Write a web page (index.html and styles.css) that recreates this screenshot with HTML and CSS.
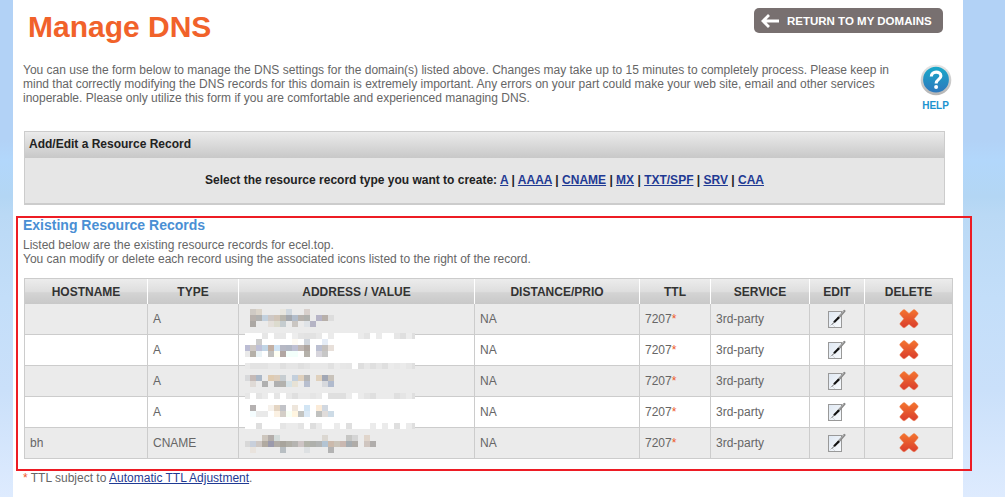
FILE: index.html
```html
<!DOCTYPE html>
<html lang="en">
<head>
<meta charset="utf-8">
<title>Manage DNS</title>
<link rel="stylesheet" href="styles.css">
</head>
<body>
<svg class="defs" width="0" height="0" aria-hidden="true">
  <defs>
    <linearGradient id="helpFill" x1="0" y1="0" x2="0" y2="1"><stop offset="0" stop-color="#19a8c9"/><stop offset="1" stop-color="#2f78bd"/></linearGradient>
    <linearGradient id="helpRing" x1="0" y1="0" x2="0" y2="1"><stop offset="0" stop-color="#e6e6e6"/><stop offset="1" stop-color="#b4b4b4"/></linearGradient>
    <linearGradient id="crossFill" x1="0" y1="0" x2="0" y2="1"><stop offset="0" stop-color="#f4752f"/><stop offset="1" stop-color="#d93c2c"/></linearGradient>
    <linearGradient id="paperFill" x1="0" y1="0" x2="1" y2="1"><stop offset="0" stop-color="#dfe8f3"/><stop offset="1" stop-color="#f8fafc"/></linearGradient>
  </defs>
  <symbol id="edit" viewBox="0 0 20 20">
    <rect x="1.5" y="2.5" width="13" height="16" fill="url(#paperFill)" stroke="#999"/>
    <path d="M5 15l3 3M2.5 17.5l3-3" stroke="#d5d8dd" fill="none"/>
    <path d="M11 9.2L17.4 2" stroke="#858585" stroke-width="2.3" stroke-linecap="round"/>
    <path d="M11.5 8L17.1 1.8" stroke="#bbb" stroke-width=".7"/>
    <path d="M7 13.2L12 8.2" stroke="#111" stroke-width="2.1"/>
    <path d="M4.8 15.7L7.6 12.8" stroke="#555" stroke-width=".9"/>
  </symbol>
  <symbol id="cross" viewBox="0 0 20 20">
    <path d="M5.8 .8L10 4.4L14.3 .8Q15.3 .2 16.2 1L18.7 3.5Q19.6 4.5 18.8 5.4L15.2 9.8L18.8 14Q19.5 15 18.7 15.9L16 18.4Q15 19.2 14 18.4L10 15.2L5.9 18.5Q5 19.2 4 18.4L1.2 15.8Q.4 14.9 1.2 14L4.8 9.8L1.1 5.6Q.3 4.6 1.2 3.6L3.9 1Q4.9 .2 5.8 .8Z" fill="url(#crossFill)" stroke="#ee8a5c" stroke-width=".5"/>
  </symbol>
</svg>
<main class="page">
  <header class="top">
    <h1 class="title">Manage DNS</h1>
    <a class="return">
      <svg class="return-arrow" width="20" height="14" viewBox="0 0 20 14"><path d="M9 1L3 7l6 6M3 7h16" fill="none" stroke="#fff" stroke-width="2.8"/></svg>
      <span class="return-label">RETURN TO MY DOMAINS</span>
    </a>
  </header>
  <section class="intro">
    <p class="intro-text">You can use the form below to manage the DNS settings for the domain(s) listed above. Changes may take up to 15 minutes to completely process. Please keep in<br>mind that correctly modifying the DNS records for this domain is extremely important. Any errors on your part could make your web site, email and other services<br>inoperable. Please only utilize this form if you are comfortable and experienced managing DNS.</p>
    <div class="help">
      <svg width="32" height="32" viewBox="0 0 32 32"><circle cx="16" cy="16" r="15.3" fill="url(#helpRing)"/><circle cx="16" cy="15.7" r="12.9" fill="url(#helpFill)"/><path d="M11.3 12.6C11.3 6.7 20.9 6.7 20.9 12C20.9 15.4 16.1 15.4 16.1 19.4" fill="none" stroke="#fff" stroke-width="3.1"/><circle cx="16.1" cy="23" r="2" fill="#fff"/></svg>
      <span class="help-label">HELP</span>
    </div>
  </section>
  <section class="panel">
    <h2 class="panel-head">Add/Edit a Resource Record</h2>
    <p class="panel-body"><span class="types">Select the resource record type you want to create: <a>A</a> | <a>AAAA</a> | <a>CNAME</a> | <a>MX</a> | <a>TXT/SPF</a> | <a>SRV</a> | <a>CAA</a></span></p>
  </section>
  <section class="existing">
    <h2 class="existing-title">Existing Resource Records</h2>
    <p class="existing-text">Listed below are the existing resource records for ecel.top.<br>You can modify or delete each record using the associated icons listed to the right of the record.</p>
    <div class="table-wrap">
    <table class="records">
      <colgroup><col class="c-host"><col class="c-type"><col class="c-addr"><col class="c-dist"><col class="c-ttl"><col class="c-serv"><col class="c-edit"><col class="c-del"></colgroup>
      <thead><tr><th>HOSTNAME</th><th>TYPE</th><th>ADDRESS / VALUE</th><th>DISTANCE/PRIO</th><th>TTL</th><th>SERVICE</th><th>EDIT</th><th>DELETE</th></tr></thead>
      <tbody>
        <tr><td></td><td>A</td><td></td><td>NA</td><td>7207<i>*</i></td><td>3rd-party</td><td class="icon"><svg><use href="#edit"/></svg></td><td class="icon"><svg><use href="#cross"/></svg></td></tr>
        <tr><td></td><td>A</td><td></td><td>NA</td><td>7207<i>*</i></td><td>3rd-party</td><td class="icon"><svg><use href="#edit"/></svg></td><td class="icon"><svg><use href="#cross"/></svg></td></tr>
        <tr><td></td><td>A</td><td></td><td>NA</td><td>7207<i>*</i></td><td>3rd-party</td><td class="icon"><svg><use href="#edit"/></svg></td><td class="icon"><svg><use href="#cross"/></svg></td></tr>
        <tr><td></td><td>A</td><td></td><td>NA</td><td>7207<i>*</i></td><td>3rd-party</td><td class="icon"><svg><use href="#edit"/></svg></td><td class="icon"><svg><use href="#cross"/></svg></td></tr>
        <tr><td>bh</td><td>CNAME</td><td></td><td>NA</td><td>7207<i>*</i></td><td>3rd-party</td><td class="icon"><svg><use href="#edit"/></svg></td><td class="icon"><svg><use href="#cross"/></svg></td></tr>
      </tbody>
    </table>
    <svg class="mosaic" id="mosaic" width="170" height="145" viewBox="1 0 170 145" shape-rendering="crispEdges"></svg>
    </div>
    <p class="note"><i>*</i> TTL subject to <a>Automatic TTL Adjustment</a>.</p>
  </section>
</main>
<div class="highlight"></div>
<script src="mosaic.js"></script>
</body>
</html>
```
FILE: styles.css
```css
* { box-sizing: border-box; }
body {
  margin: 0;
  height: 497px;
  overflow: hidden;
  font: 12px/14px "Liberation Sans", Arial, sans-serif;
  color: #666;
  background: linear-gradient(#b2d2f6 0, #b2d2f6 140px, #b2d7fb 160px, #b3d6f4 197px, #bad9f5 215px, #c3def9 298px, #cae0fa 390px, #deebfe 497px);
}
.defs { position: absolute; }
h1, h2, p { margin: 0; }
i { color: #ee5a2b; font-style: normal; }
a { color: #1f3a93; text-decoration: underline; }
.page { width: 950px; height: 497px; margin-left: 13px; padding: 8px 0 0 11px; background: #fff; }
.top { display: flex; justify-content: space-between; height: 55px; padding: 0 20px 0 4px; }
.title { font-size: 30px; line-height: 37px; color: #f1622a; }
.return { display: flex; align-items: center; width: 189px; height: 25px; padding-left: 6px; gap: 7px; border-radius: 5px; background: #787070; text-decoration: none; }
.return-label { color: #fff; font-size: 11.5px; font-weight: bold; white-space: nowrap; }
.intro { display: flex; height: 68px; }
.intro-text { width: 896px; margin-left: -1px; white-space: nowrap; }
.help { display: flex; flex-direction: column; align-items: center; width: 33px; padding-top: 1px; }
.help-label { margin-top: 3px; font-size: 10px; font-weight: bold; color: #1d93cf; }
.panel { width: 921px; height: 74px; border: 1px solid #ccc; border-bottom-width: 2px; background: #e6e6e6; color: #222; }
.panel-head { height: 26px; padding-left: 4px; font-size: 12px; line-height: 25px; background: linear-gradient(#ebebeb, #c8c8c8); }
.panel-body { line-height: 44px; font-weight: bold; text-align: center; }
.types { white-space: nowrap; }
.existing { padding-top: 12px; }
.existing-title { margin-left: -1px; font-size: 14px; line-height: 16px; color: #4a8fd4; }
.existing-text { margin-left: -1px; padding-top: 5px; }
.table-wrap { position: relative; margin-top: 12px; }
.records { width: 929px; table-layout: fixed; border-collapse: separate; border-spacing: 0; border: solid #ccc; border-width: 1px 0 0 1px; }
.c-host { width: 123px; }
.c-type { width: 91px; }
.c-addr { width: 236px; }
.c-dist { width: 165px; }
.c-ttl { width: 71px; }
.c-serv { width: 99px; }
.c-edit { width: 55px; }
.c-del { width: 88px; }
th { height: 25px; padding: 0; border-right: 1px solid #fff; background: linear-gradient(#ececec 0, #dedede 50%, #d4d4d4 55%, #c8c8c8 100%); color: #333; font-size: 12px; }
th:last-child { border-right-color: #ccc; }
td { height: 31px; padding: 0 5px; border: solid #ccc; border-width: 0 1px 1px 0; }
tbody tr:nth-child(odd) { background: #ebebeb; }
.icon { padding: 0; text-align: center; }
.icon svg { display: block; width: 20px; height: 20px; margin: 0 auto; }
.mosaic { position: absolute; left: 221px; top: 31px; }
.note { margin: 12px 0 0 -1px; }
.highlight { position: absolute; left: 16px; top: 216px; width: 956px; height: 255px; border: 2px solid #ed1c24; }
```
FILE: mosaic.js
```js
// Censored address values: each row is [y, first column, colours of 6px cells]; "-" leaves a cell clear.
const rows = [
  [4, 1, "cfcac4 dbd4c9 - - - e8e6df d0d8df - - d8d0cc"],
  [10, 1, "b8b1ac b1b1b0 c3d1de cec8c5 d1c5b8 b9b6ad a4a8ae b2bdcb b7b2ad b0b1ae - b6b4c7 b8b0aa dddddd"],
  [16, 1, "aca8a4 - - e4dfda dcdbce c5cccf - cac6c2 - dfe3e7 b5b4c5"],
  [28, 0, "fff fff fff e6e6e6 fff e8e8e8 e8e8e8 fff ededed e4e4e4 e2e2e2 e2e2e2 e8e8e8 fff ebebeb fff fff fff fff ebebeb e4e4e4 fff ebebeb fff fff e6e6e6 dfdfdf ededed dfdfdf"]
].map(([y, start, colours]) => [y - 4, start, colours]).concat([
  [30, 2, "cccccc - - - - - fefaf3 - d0d5dc - - e5ecf6"],
  [36, 0, "bcbdd4 cfc9c5 bfc1d8 c1d5e6 c2afa3 d0e4f5 b6b8c4 b2b7c4 bfc0d3 c1b8b4 aea59f - bcc0d2 c5c1be e8e0da"],
  [42, 0, "eaeaea b5b0a8 eaf3f6 - c1c0be fffff3 b1a6a2 f3fffb f3fffb - b5b1aa - d7d5dc c7c7c7"],
  [54, 0, "e9e9e9 e3e3e3 e3e3e3 e3e3e3 e8e8e8 e8e8e8 dfdfdf e5e5e5 e5e5e5 dfdfdf e3e3e3 e8e8e8 e8e8e8 e8e8e8 e1e1e1 ebebeb e7e7e7 e6e6e6 fff dedede e7e7e7 dfdfdf e6e6e6 dfdfdf ebebeb e8e8e8 ebebeb e6e6e6 dfdfdf"],
  [66, 0, "d8d9db c5bab7 acb8c7 - dfcbb1 dccdbc c7cdd1 - c3cfdc dfd0bd b4b4b4 - e0d1bd a1a7b5 c8c2ba"],
  [72, 1, "dfdad6 - b0b0b0 - b0b0b0 b3b2ae d5e2e7 e7e2d5 - b8bfcf - - d7d9dd b0bacd"],
  [84, 0, "e7e7e7 fff e4e4e4 ebebeb fff e5e5e5 fff e8e8e8 dfdfdf e9e9e9 e9e9e9 e5e5e5 e9e9e9 fff dfdfdf dfdfdf dfdfdf ececec fff ebebeb e4e4e4 dfdfdf ebebeb ebebeb ebebeb dfdfdf e5e5e5 ebebeb dfdfdf"],
  [96, 1, "b5b1b1 - - f6f1eb e4d5c3 c2c3c8 - eee6dc - d2e5f4 - fbebd8 d1d8e1"],
  [102, 1, "f5fdff e9e9e9 e9e9e9 - fbf1e3 d4cec7 f8fff5 fff5e0 c3c4c2 dceaf7 - c0c1bf e0dcda cddbe6"],
  [114, 0, "fff fff dedede fff fff fff e5e5e5 ebebeb ebebeb e4e4e4 fff dedede ebebeb fff fff ebebeb fff dfdfdf fff fff fff ebebeb fff ebebeb fff dfdfdf fff ebebeb dfdfdf"],
  [126, 3, "cdc6bd b3adaa d4dcdb - - - - - - - dbd7d1 - - - c6c6c4 d5d5d5 - e0d5cb"],
  [132, 0, "d8d8d8 c8cfdb cec7c3 b1aaa1 9b9aac b1aca6 a8a49c b0aea6 b5b4b1 cec5c5 b3b4aa afb0ac b2b4b4 b3c4d3 cbbaac cac4b9 cab8b1 a6acb1 b0aca8 - cfc5bf b0adab"],
  [138, 1, "e9e3dd - - - - b8bec2 - - - dde0e2 - - - b3b3b3"]
]);
const host = document.getElementById("mosaic");
let cells = '<path fill="#fff" d="M1 24h170v36H1zM1 90h170v30H1z"/>';
for (const [y, start, colours] of rows) {
  colours.split(" ").forEach((c, n) => {
    if (c !== "-") cells += `<rect x="${(start + n) * 6}" y="${y}" width="6" height="6" fill="#${c}"/>`;
  });
}
host.innerHTML = cells;
```
